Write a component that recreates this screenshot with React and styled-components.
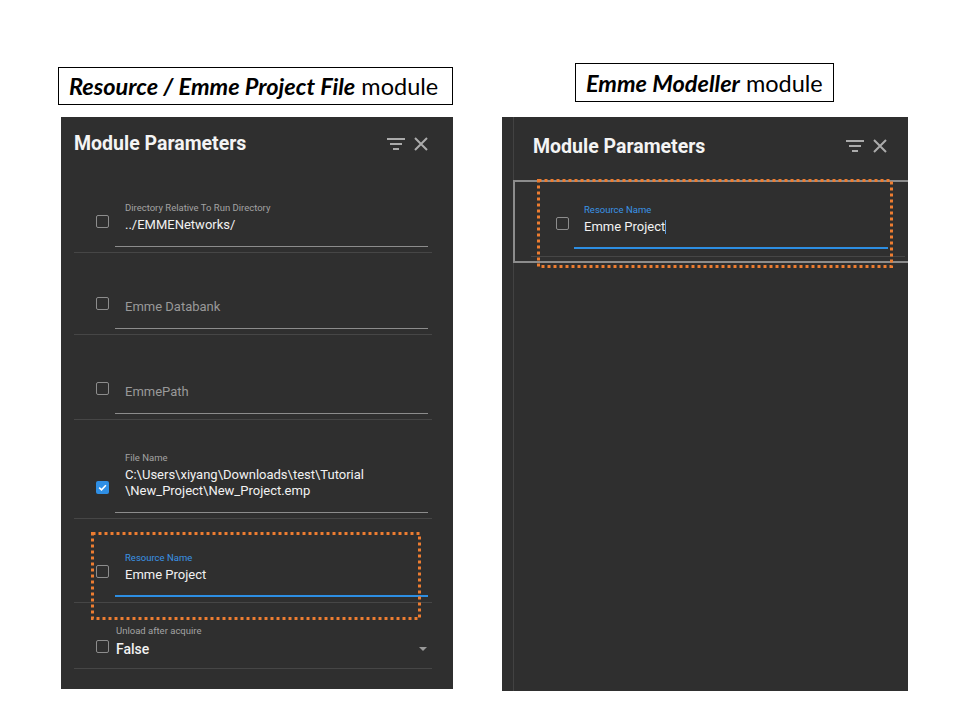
import React from 'react'
import styled, { createGlobalStyle } from 'styled-components'

const Global = createGlobalStyle`
  body {
    margin: 0;
    background: #ffffff;
    font-family: Roboto, "Liberation Sans", sans-serif;
  }
`

const Page = styled.div`
  display: flex;
  align-items: flex-start;
  width: 960px;
  height: 720px;
  padding: 63px 0 0 58px;
  box-sizing: border-box;
`
const Column = styled.div`
  display: flex;
  flex-direction: column;
  width: ${p => p.$w}px;
  margin-left: ${p => p.$gap || 0}px;
`
const CaptionSlot = styled.div`
  height: 54px;
  display: flex;
  align-items: flex-start;
`
const Caption = styled.div`
  box-sizing: border-box;
  width: ${p => p.$w}px;
  height: ${p => p.$h}px;
  margin: ${p => p.$top}px 0 0 ${p => p.$left}px;
  border: 1px solid #000;
  display: flex;
  align-items: center;
  padding-left: 10px;
  font-family: Lato, "Open Sans", sans-serif;
  font-size: 23.5px;
  color: #000;
  white-space: nowrap;
  b {
    font-weight: 700;
    font-style: italic;
  }
`
const Panel = styled.div`
  position: relative;
  box-sizing: border-box;
  width: ${p => p.$w}px;
  height: ${p => p.$h}px;
  margin-left: ${p => p.$left || 0}px;
  background: #2f2f2f;
  display: flex;
`
const Sidebar = styled.div`
  width: 11px;
  flex: none;
`
const Content = styled.div`
  flex: 1;
  display: flex;
  flex-direction: column;
  border-left: ${p => (p.$line ? '1px solid #424242' : 'none')};
`
const Header = styled.div`
  display: flex;
  align-items: center;
  justify-content: space-between;
  height: ${p => p.$h}px;
  padding: 0 ${p => p.$right}px 0 ${p => p.$left}px;
`
const Title = styled.div`
  color: #f4f4f4;
  font-size: 19.5px;
  font-weight: 700;
`
const Tools = styled.div`
  display: flex;
  align-items: center;
  gap: 7px;
  color: #ababab;
`
const Rows = styled.div`
  display: flex;
  flex-direction: column;
  margin: 0 21px 0 13px;
`
const Row = styled.div`
  box-sizing: border-box;
  display: flex;
  align-items: flex-end;
  height: ${p => p.$h}px;
  padding: 0 0 ${p => p.$pb ?? 5}px ${p => p.$pl ?? 22}px;
  border-bottom: 1px solid #464646;
`
const Check = styled.div`
  flex: none;
  box-sizing: border-box;
  width: 13px;
  height: 13px;
  margin-bottom: ${p => p.$mb ?? 19}px;
  border-radius: 2px;
  border: ${p => (p.$on ? 'none' : '1.5px solid #8d8d8d')};
  background: ${p => (p.$on ? '#2f8fe5' : 'transparent')};
  display: flex;
  align-items: center;
  justify-content: center;
`
const Field = styled.div`
  flex: 1;
  display: flex;
  flex-direction: column;
  margin: 0 ${p => p.$mr ?? 4}px 0 ${p => p.$ml ?? 6}px;
  padding: 0 0 ${p => (p.$focus ? 12 : 13)}px 10px;
  border-bottom: ${p => (p.$focus ? '2px solid #2d8ee2' : '1px solid #8c8c8c')};
`
const Label = styled.div`
  font-size: 9.5px;
  line-height: 12px;
  margin-bottom: 3px;
  color: ${p => (p.$focus ? '#3a93e6' : '#a3a3a3')};
`
const Value = styled.div`
  font-size: 13px;
  line-height: 16px;
  color: ${p => (p.$muted ? '#999999' : '#f2f2f2')};
  display: flex;
  align-items: center;
`
const Caret = styled.span`
  display: inline-block;
  width: 1px;
  height: 14px;
  background: #5a9be0;
`
const Select = styled.div`
  flex: 1;
  display: flex;
  flex-direction: column;
  margin: 0 5px 0 7px;
  padding-bottom: 10px;
`
const SelectValue = styled.div`
  display: flex;
  align-items: center;
  justify-content: space-between;
  color: #f2f2f2;
  font-size: 14px;
  font-weight: 500;
  line-height: 18px;
`
const Arrow = styled.span`
  width: 0;
  height: 0;
  border-left: 4px solid transparent;
  border-right: 4px solid transparent;
  border-top: 4px solid #9a9a9a;
`
const Selected = styled.div`
  box-sizing: border-box;
  height: 83px;
  margin: 5px 0 0 -1px;
  border: 2px solid #8c8c8c;
  border-right: none;
`
const SelectedRows = styled.div`
  margin: 0 3px 0 16px;
`
const Mark = styled.svg`
  position: absolute;
  left: ${p => p.$x}px;
  top: ${p => p.$y}px;
  pointer-events: none;
`

const FilterIcon = () => (
  <svg width="20" height="14" viewBox="0 0 20 14">
    <rect x="1" y="1" width="18" height="2" fill="currentColor" />
    <rect x="4" y="6" width="12" height="2" fill="currentColor" />
    <rect x="7" y="11" width="6" height="2" fill="currentColor" />
  </svg>
)
const CloseIcon = () => (
  <svg width="16" height="16" viewBox="0 0 16 16">
    <path d="M2 2 L14 14 M14 2 L2 14" stroke="currentColor" strokeWidth="2" />
  </svg>
)
const Tick = () => (
  <svg width="11" height="11" viewBox="0 0 11 11">
    <path d="M2.2 5.6 L4.5 7.8 L8.9 3.2" stroke="#fff" strokeWidth="1.6" fill="none" />
  </svg>
)
const Dotted = ({ x, y, w, h }) => (
  <Mark $x={x} $y={y} width={w} height={h}>
    <rect x="1.5" y="1.5" width={w - 3} height={h - 3} fill="none" stroke="#ED7D31" strokeWidth="3" strokeDasharray="3 3" />
  </Mark>
)

const PanelHead = ({ h, left, right }) => (
  <Header $h={h} $left={left} $right={right}>
    <Title>Module Parameters</Title>
    <Tools>
      <FilterIcon />
      <CloseIcon />
    </Tools>
  </Header>
)

const fields = [
  { h: 83, label: 'Directory Relative To Run Directory', value: ['../EMMENetworks/'] },
  { h: 82, placeholder: 'Emme Databank' },
  { h: 85, placeholder: 'EmmePath' },
  { h: 99, label: 'File Name', value: ['C:\\Users\\xiyang\\Downloads\\test\\Tutorial', '\\New_Project\\New_Project.emp'], on: true },
  { h: 84, label: 'Resource Name', value: ['Emme Project'], focus: true },
]

export default function App() {
  return (
    <Page>
      <Global />
      <Column $w={395}>
        <CaptionSlot>
          <Caption $w={395} $h={38} $top={4} $left={0}>
            <b>Resource / Emme Project File</b>&nbsp;module
          </Caption>
        </CaptionSlot>
        <Panel $w={392} $h={572} $left={3}>
          <Content>
            <PanelHead h={53} left={13} right={24} />
            <Rows>
              {fields.map(f => (
                <Row key={f.label || f.placeholder} $h={f.h}>
                  <Check $on={f.on}>{f.on && <Tick />}</Check>
                  <Field $focus={f.focus}>
                    {f.label && <Label $focus={f.focus}>{f.label}</Label>}
                    {f.placeholder && <Value $muted>{f.placeholder}</Value>}
                    {f.value && f.value.map(v => <Value key={v}>{v}</Value>)}
                  </Field>
                </Row>
              ))}
              <Row $h={66} $pb={0}>
                <Check $mb={15} />
                <Select>
                  <Label>Unload after acquire</Label>
                  <SelectValue>
                    False
                    <Arrow />
                  </SelectValue>
                </Select>
              </Row>
            </Rows>
          </Content>
          <Dotted x={30} y={415} w={330} h={88} />
        </Panel>
      </Column>

      <Column $w={406} $gap={49}>
        <CaptionSlot>
          <Caption $w={259} $h={39} $top={0} $left={73}>
            <b>Emme Modeller</b>&nbsp;module
          </Caption>
        </CaptionSlot>
        <Panel $w={406} $h={574}>
          <Sidebar />
          <Content $line>
            <PanelHead h={58} left={19} right={20} />
            <Selected>
              <SelectedRows>
                <Row $h={75} $pl={25} $pb={7}>
                  <Check />
                  <Field $focus $ml={5} $mr={17}>
                    <Label $focus>Resource Name</Label>
                    <Value>
                      Emme Project
                      <Caret />
                    </Value>
                  </Field>
                </Row>
              </SelectedRows>
            </Selected>
          </Content>
          <Dotted x={35} y={62} w={356} h={89} />
        </Panel>
      </Column>
    </Page>
  )
}
